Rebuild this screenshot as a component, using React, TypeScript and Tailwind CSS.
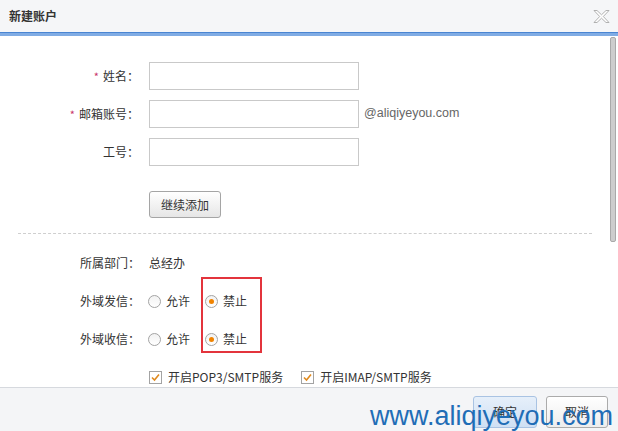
import React from 'react'

const font = '"Noto Sans CJK SC", "Liberation Sans", sans-serif'

function Radio({ checked, label }: { checked?: boolean; label: string }) {
  return (
    <label className="flex items-center">
      <span className="flex h-[13px] w-[13px] items-center justify-center rounded-full border border-[#a3a3a3] bg-gradient-to-b from-[#f2f2f2] to-white">
        {checked && <span className="h-[5px] w-[5px] rounded-full bg-[#f08300]" />}
      </span>
      <span className="ml-[5px]">{label}</span>
    </label>
  )
}

function Check({ label }: { label: string }) {
  return (
    <label className="flex items-center">
      <span className="flex h-[13px] w-[13px] items-center justify-center border border-[#a3a3a3] bg-white">
        <svg width="9" height="9" viewBox="0 0 9 9">
          <path d="M1 4.5 L3.5 7 L8 1.5" fill="none" stroke="#e08a1e" strokeWidth="1.6" />
        </svg>
      </span>
      <span className="ml-[6px]">{label}</span>
    </label>
  )
}

function Row({ label, required, children }: { label: string; required?: boolean; children?: React.ReactNode }) {
  return (
    <div className="flex h-[27px] items-center">
      <div className="w-[140px] pr-[1px] text-right">
        {required && <span className="mr-[4px] text-[11px] text-[#c8336b]">*</span>}
        {label}：
      </div>
      <div className="ml-[9px] flex items-center">{children}</div>
    </div>
  )
}

function TextInput() {
  return <input className="h-[28px] w-[210px] border border-[#c9c9c9] bg-white px-1 outline-none" />
}

export default function App() {
  return (
    <div
      className="relative h-[431px] w-[618px] overflow-hidden bg-white text-[12px] text-[#333]"
      style={{ fontFamily: font }}
    >
      <div className="flex h-[32px] items-center justify-between bg-[#f5f6f8] pl-[9px] pr-[8px]">
        <span className="text-[12px] font-bold text-[#333]">新建账户</span>
        <svg width="17" height="13" viewBox="0 0 17 13">
          <path
            d="M1 0.5 H4 L8.5 4.8 L13 0.5 H16 L10.3 6.5 L16 12.5 H13 L8.5 8.2 L4 12.5 H1 L6.7 6.5 Z"
            fill="#fff"
            stroke="#a8a8a8"
            strokeWidth="0.9"
          />
        </svg>
      </div>
      <div className="h-[1px] bg-[#4a85d2]" />
      <div className="h-[3px] bg-[#80ace4]" />

      <div className="relative h-[351px] overflow-hidden">
        <div className="flex flex-col pt-[26px]">
          <div className="flex flex-col gap-[11px]">
            <Row label="姓名" required>
              <TextInput />
            </Row>
            <Row label="邮箱账号" required>
              <TextInput />
              <span className="ml-[5px] text-[12.5px] text-[#666]" style={{ fontFamily: '"Liberation Sans", sans-serif' }}>
                @aliqiyeyou.com
              </span>
            </Row>
            <Row label="工号">
              <TextInput />
            </Row>
          </div>

          <div className="ml-[149px] mt-[26px]">
            <button className="h-[27px] w-[72px] rounded-[3px] border border-[#a5a5a5] bg-gradient-to-b from-white to-[#e6e6e6] text-[12px] text-[#333]">
              继续添加
            </button>
          </div>

          <div className="ml-[18px] mt-[15px] w-[574px] border-t border-dashed border-[#cfcfcf]" />

          <div className="mt-[17px] flex flex-col gap-[14px]">
            <div className="flex h-[24px] items-center">
              <div className="w-[140px] text-right">所属部门：</div>
              <div className="ml-[9px]">总经办</div>
            </div>
            <div className="flex h-[24px] items-center">
              <div className="w-[140px] text-right">外域发信：</div>
              <div className="ml-[8px] flex items-center gap-[15px]">
                <Radio label="允许" />
                <Radio label="禁止" checked />
              </div>
            </div>
            <div className="flex h-[24px] items-center">
              <div className="w-[140px] text-right">外域收信：</div>
              <div className="ml-[8px] flex items-center gap-[15px]">
                <Radio label="允许" />
                <Radio label="禁止" checked />
              </div>
            </div>
            <div className="ml-[149px] flex h-[24px] items-center gap-[18px]">
              <Check label="开启POP3/SMTP服务" />
              <Check label="开启IMAP/SMTP服务" />
            </div>
          </div>
        </div>

        <div className="absolute left-[201px] top-[241px] h-[76px] w-[61px] border-2 border-[#e3343c]" />
        <div className="absolute right-[2px] top-[1px] h-[205px] w-[6px] rounded-[2px] border border-[#a9a9a9] bg-[#cdcdcd]" />
      </div>

      <div className="flex h-[44px] justify-end gap-[9px] border-t border-[#d6d9de] bg-[#f4f5f7] pr-[10px] pt-[8px]">
        <button className="h-[32px] w-[64px] rounded-[3px] border border-[#a9c3e3] bg-gradient-to-b from-[#e6effa] to-[#cfe0f4] text-[12px] text-[#333]">
          确定
        </button>
        <button className="h-[32px] w-[62px] rounded-[3px] border border-[#ababab] bg-gradient-to-b from-white to-[#ededed] text-[12px] text-[#333]">
          取消
        </button>
      </div>

      <div
        className="absolute left-[370px] top-[403px] text-[27px] leading-none text-[#1f6db6]"
        style={{ fontFamily: '"Liberation Sans", Arial, sans-serif' }}
      >
        www.aliqiyeyou.com
      </div>
    </div>
  )
}
